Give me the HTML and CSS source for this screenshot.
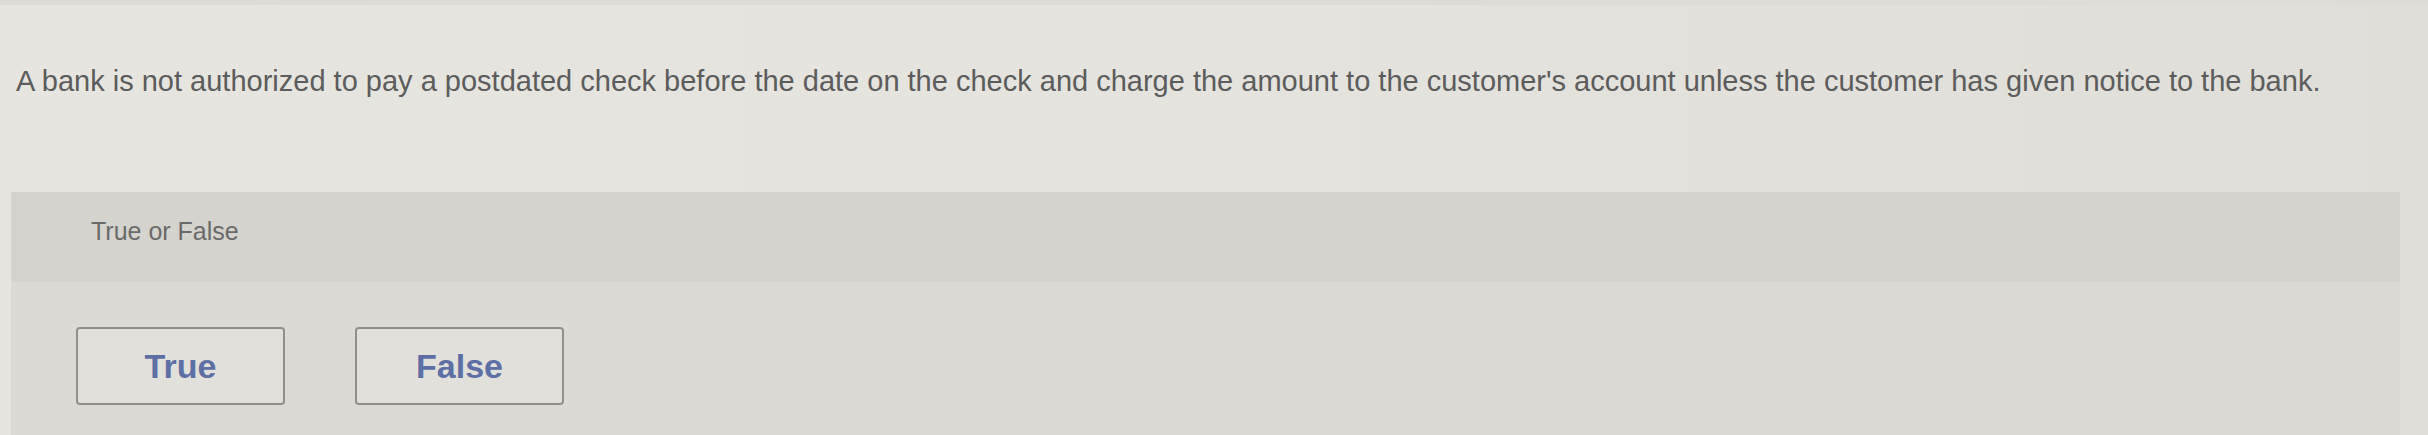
FILE: index.html
```html
<!DOCTYPE html>
<html lang="en">
<head>
<meta charset="utf-8">
<title>True or False</title>
<link rel="stylesheet" href="styles.css">
</head>
<body>
<div class="topband"></div>
<p class="question">A bank is not authorized to pay a postdated check before the date on the check and charge the amount to the customer's account unless the customer has given notice to the bank.</p>
<section class="panel">
  <div class="panel-head">True or False</div>
  <div class="panel-body">
    <button class="choice" type="button">True</button>
    <button class="choice" type="button">False</button>
  </div>
</section>
</body>
</html>
```

FILE: styles.css
```css
html, body {
  margin: 0;
  padding: 0;
}
body {
  width: 2428px;
  height: 435px;
  overflow: hidden;
  background: linear-gradient(90deg, #e6e5e0 0%, #e4e3de 50%, #dfded8 100%);
  font-family: "Liberation Sans", Arial, sans-serif;
}
.topband {
  height: 5px;
  background: #dedcd7;
}
.question {
  margin: 60px 0 0 16px;
  font-size: 29px;
  line-height: 32px;
  color: #5c5c5c;
  white-space: nowrap;
}
.panel {
  margin: 95px 28px 0 11px;
  height: 243px;
  background: #dbdad5;
}
.panel-head {
  height: 90px;
  box-sizing: border-box;
  padding: 27px 0 0 80px;
  background: #d4d3cd;
  font-size: 25px;
  line-height: 25px;
  color: #6a6a6a;
}
.panel-body {
  display: flex;
  gap: 70px;
  padding: 45px 0 0 65px;
}
.choice {
  width: 209px;
  height: 78px;
  box-sizing: border-box;
  border: 2px solid #8f8f8b;
  border-radius: 4px;
  background: #e1e0db;
  font-family: "Liberation Sans", Arial, sans-serif;
  font-weight: bold;
  font-size: 34px;
  color: #5e6fa5;
  padding: 0;
}
```
